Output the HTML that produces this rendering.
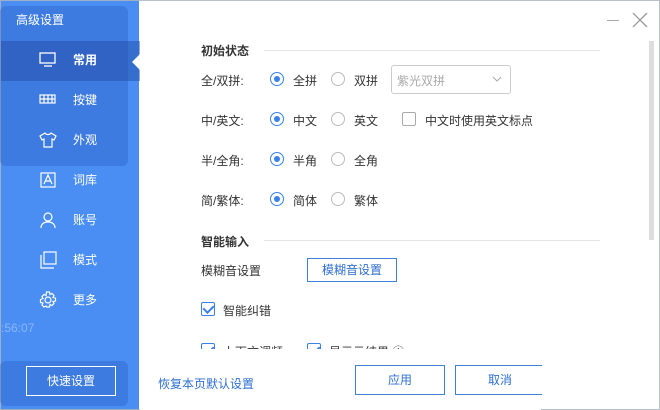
<!DOCTYPE html>
<html><head><meta charset="utf-8"><style>
*{margin:0;padding:0;box-sizing:border-box}
body{width:660px;height:410px;overflow:hidden;background:#fff;font-family:"Liberation Sans","Noto Sans CJK SC",sans-serif;font-size:12px;color:#333;position:relative}
.a{position:absolute}
.side{left:0;top:0;width:139px;height:410px;background:#4a8ef4;border:1px solid #9fb0c4;border-right:none}
.panel{background:rgba(40,90,190,.35);border-radius:6px}
.nav{left:0;width:139px;height:40px;color:#fff;font-size:12px}
.nav .t{position:absolute;left:72px;top:10px}
.nav svg{position:absolute;left:38px;top:10px}
.rad{width:14px;height:14px;border:1px solid #bbb;border-radius:50%}
.rad.on{border-color:#3a80e8}
.rad.on::after{content:"";position:absolute;left:3px;top:3px;width:6px;height:6px;border-radius:50%;background:#3a80e8}
.cb{width:14px;height:14px;border:1px solid #aaa;border-radius:2px}
.cb.on{border-color:#3a80e8}
.cb.on::after{content:"";position:absolute;left:3px;top:0px;width:5px;height:8px;border:solid #3a80e8;border-width:0 2px 2px 0;transform:rotate(45deg)}
.btn{border:1px solid #3f7fd8;color:#2f6fcf;text-align:center;font-size:12px;background:#fff}
</style></head><body>
<div class="a" style="left:0;top:0;width:660px;height:410px;border:1px solid #b9c2cc"></div>
<div class="a side">
 <div class="a panel" style="left:-1px;top:5px;width:128px;height:160px"></div>
 <div class="a panel" style="left:-1px;top:360px;width:128px;height:45px"></div>
 <div class="a" style="left:15px;top:10px;color:#fff;font-size:12px">高级设置</div>
 <div class="a" style="left:0;top:40px;width:139px;height:40px;background:rgba(30,70,160,.45)"></div>
 <div class="a" style="left:131px;top:53px;width:0;height:0;border-top:8px solid transparent;border-bottom:8px solid transparent;border-right:8px solid #fff"></div>
 <div class="a nav" style="top:40px"><svg width="18" height="18" fill="none" stroke="#fff" stroke-width="1.3"><rect x="1" y="2" width="15" height="10"/><path d="M5 15h8"/></svg><span class="t" style="font-weight:bold">常用</span></div>
 <div class="a nav" style="top:80px"><svg width="18" height="18" fill="none" stroke="#fff" stroke-width="1.2"><rect x="1" y="4" width="15" height="8"/><path d="M1 8h15M5 4v8M9 4v8M13 4v8"/></svg><span class="t">按键</span></div>
 <div class="a nav" style="top:120px"><svg width="18" height="18" fill="none" stroke="#fff" stroke-width="1.2"><path d="M6 2L1 5l2 4 2-1v8h8V8l2 1 2-4-5-3c-1 2-5 2-6 0z"/></svg><span class="t">外观</span></div>
 <div class="a nav" style="top:160px"><svg width="18" height="18" fill="none" stroke="#fff" stroke-width="1.2"><rect x="2" y="2" width="14" height="14"/><path d="M5 13l4-9 4 9M6.5 10h5"/></svg><span class="t">词库</span></div>
 <div class="a nav" style="top:200px"><svg width="18" height="18" fill="none" stroke="#fff" stroke-width="1.2"><circle cx="9" cy="6" r="4"/><path d="M2 17c0-4 3-6 7-6s7 2 7 6"/></svg><span class="t">账号</span></div>
 <div class="a nav" style="top:240px"><svg width="18" height="18" fill="none" stroke="#fff" stroke-width="1.2"><rect x="5" y="1" width="12" height="12"/><path d="M2 4v13h13"/></svg><span class="t">模式</span></div>
 <div class="a nav" style="top:280px"><svg width="18" height="18" fill="none" stroke="#fff" stroke-width="1.2"><circle cx="9" cy="9" r="3"/><path d="M7.5 1h3l.5 2.5 2-1 2 2-1 2 2.5.5v3l-2.5.5 1 2-2 2-2-1-.5 2.5h-3L7 15l-2 1-2-2 1-2-2.5-.5v-3L4 7.5l-1-2 2-2 2 1z"/></svg><span class="t">更多</span></div>
 <div class="a" style="left:0;top:320px;color:rgba(255,255,255,.35);font-size:12px">:56:07</div>
 <div class="a" style="left:25px;top:365px;width:90px;height:30px;border:1px solid #fff;color:#fff;text-align:center;line-height:28px;font-size:12px">快速设置</div>
</div>
<div class="a" style="left:607px;top:20px;width:12px;height:1px;background:#aaa"></div>
<svg class="a" style="left:632px;top:12px" width="16" height="16" stroke="#999" stroke-width="1.3"><path d="M1 1l14 14M15 1L1 15"/></svg>
<div class="a" style="left:649px;top:41px;width:5px;height:199px;background:#ddd"></div>

<div class="a" style="left:201px;top:42px;font-weight:bold">初始状态</div>
<div class="a" style="left:264px;top:50px;width:336px;height:1px;background:#e6e6e6"></div>

<div class="a" style="left:201px;top:72px">全/双拼:</div>
<div class="a rad on" style="left:270px;top:72px"></div><div class="a" style="left:293px;top:72px">全拼</div>
<div class="a rad" style="left:331px;top:72px"></div><div class="a" style="left:354px;top:72px">双拼</div>
<div class="a" style="left:391px;top:65px;width:120px;height:29px;border:1px solid #ccc;border-radius:3px;color:#aaa;padding:6px 0 0 5px">紫光双拼</div>
<svg class="a" style="left:492px;top:75px" width="10" height="8" fill="none" stroke="#aaa"><path d="M1 2l4 4 4-4"/></svg>

<div class="a" style="left:201px;top:112px">中/英文:</div>
<div class="a rad on" style="left:270px;top:112px"></div><div class="a" style="left:293px;top:112px">中文</div>
<div class="a rad" style="left:331px;top:112px"></div><div class="a" style="left:354px;top:112px">英文</div>
<div class="a cb" style="left:402px;top:112px"></div><div class="a" style="left:425px;top:112px">中文时使用英文标点</div>

<div class="a" style="left:201px;top:152px">半/全角:</div>
<div class="a rad on" style="left:270px;top:152px"></div><div class="a" style="left:293px;top:152px">半角</div>
<div class="a rad" style="left:331px;top:152px"></div><div class="a" style="left:354px;top:152px">全角</div>

<div class="a" style="left:201px;top:192px">简/繁体:</div>
<div class="a rad on" style="left:270px;top:192px"></div><div class="a" style="left:293px;top:192px">简体</div>
<div class="a rad" style="left:331px;top:192px"></div><div class="a" style="left:354px;top:192px">繁体</div>

<div class="a" style="left:201px;top:233px;font-weight:bold">智能输入</div>
<div class="a" style="left:264px;top:240px;width:336px;height:1px;background:#e6e6e6"></div>
<div class="a" style="left:201px;top:262px">模糊音设置</div>
<div class="a btn" style="left:307px;top:258px;width:90px;height:24px;line-height:22px">模糊音设置</div>
<div class="a cb on" style="left:201px;top:302px"></div><div class="a" style="left:223px;top:302px">智能纠错</div>
<div style="position:absolute;left:195px;top:340px;width:300px;height:9px;overflow:hidden">
 <div class="a cb on" style="left:6px;top:3px"></div><div class="a" style="left:28px;top:3px">上下文调频</div>
 <div class="a cb on" style="left:112px;top:3px"></div><div class="a" style="left:134px;top:3px">显示云结果 ⓘ</div>
</div>
<div class="a" style="left:140px;top:355px;width:401px;height:55px;background:#fff"></div>
<div class="a" style="left:158px;top:375px;color:#2f6fcf">恢复本页默认设置</div>
<div class="a btn" style="left:355px;top:365px;width:90px;height:30px;line-height:28px">应用</div>
<div class="a btn" style="left:455px;top:365px;width:90px;height:30px;line-height:28px">取消</div>
<div class="a" style="left:542px;top:355px;width:117px;height:54px;background:#fff"></div>
</body></html>
